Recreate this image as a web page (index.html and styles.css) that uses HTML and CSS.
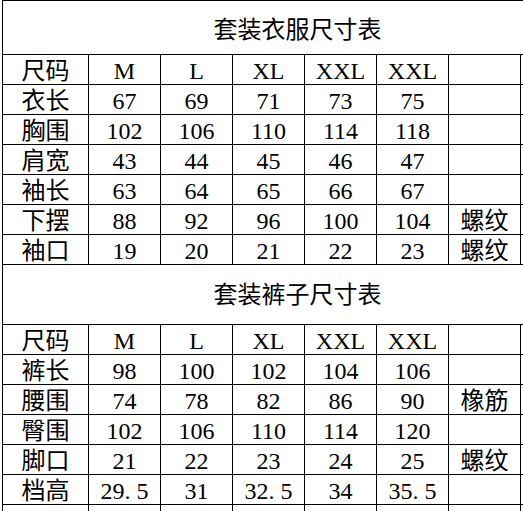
FILE: index.html
```html
<!DOCTYPE html>
<html lang="zh">
<head>
<meta charset="utf-8">
<title>套装尺寸表</title>
<link rel="stylesheet" href="styles.css">
</head>
<body>
<div class="sheet">
<table class="size-table">
  <colgroup>
    <col class="c-label">
    <col class="c-val"><col class="c-val"><col class="c-val"><col class="c-val"><col class="c-val">
    <col class="c-val"><col class="c-val">
  </colgroup>
  <tbody>
    <tr class="title-row first"><td colspan="8">套装衣服尺寸表</td></tr>
    <tr><td>尺码</td><td>M</td><td>L</td><td>XL</td><td>XXL</td><td>XXL</td><td></td><td></td></tr>
    <tr><td>衣长</td><td>67</td><td>69</td><td>71</td><td>73</td><td>75</td><td></td><td></td></tr>
    <tr><td>胸围</td><td>102</td><td>106</td><td>110</td><td>114</td><td>118</td><td></td><td></td></tr>
    <tr><td>肩宽</td><td>43</td><td>44</td><td>45</td><td>46</td><td>47</td><td></td><td></td></tr>
    <tr><td>袖长</td><td>63</td><td>64</td><td>65</td><td>66</td><td>67</td><td></td><td></td></tr>
    <tr><td>下摆</td><td>88</td><td>92</td><td>96</td><td>100</td><td>104</td><td>螺纹</td><td></td></tr>
    <tr><td>袖口</td><td>19</td><td>20</td><td>21</td><td>22</td><td>23</td><td>螺纹</td><td></td></tr>
    <tr class="title-row second"><td colspan="8">套装裤子尺寸表</td></tr>
    <tr><td>尺码</td><td>M</td><td>L</td><td>XL</td><td>XXL</td><td>XXL</td><td></td><td></td></tr>
    <tr><td>裤长</td><td>98</td><td>100</td><td>102</td><td>104</td><td>106</td><td></td><td></td></tr>
    <tr><td>腰围</td><td>74</td><td>78</td><td>82</td><td>86</td><td>90</td><td>橡筋</td><td></td></tr>
    <tr><td>臀围</td><td>102</td><td>106</td><td>110</td><td>114</td><td>120</td><td></td><td></td></tr>
    <tr><td>脚口</td><td>21</td><td>22</td><td>23</td><td>24</td><td>25</td><td>螺纹</td><td></td></tr>
    <tr><td>档高</td><td>29.<span class="dec">5</span></td><td>31</td><td>32.<span class="dec">5</span></td><td>34</td><td>35.<span class="dec">5</span></td><td></td><td></td></tr>
    <tr><td>&nbsp;</td><td></td><td></td><td></td><td></td><td></td><td></td><td></td></tr>
  </tbody>
</table>
</div>
</body>
</html>
```

FILE: styles.css
```css
html, body {
  margin: 0;
  padding: 0;
  background: #fff;
  overflow: hidden;
  width: 523px;
  height: 511px;
}

.sheet {
  margin-left: 2px;
  width: 521px;
  height: 511px;
  overflow: hidden;
}

.size-table {
  border-collapse: collapse;
  table-layout: fixed;
  width: 591px;
  font-family: "Liberation Serif", "Noto Sans CJK SC", serif;
  font-size: 24px;
  color: #000;
}

.c-label { width: 86px; }
.c-val { width: 72px; }

.size-table td {
  border: 1px solid #000;
  height: 29px;
  padding: 2px 0 0 0;
  text-align: center;
  vertical-align: middle;
  line-height: 26px;
  white-space: nowrap;
  overflow: hidden;
  box-sizing: border-box;
}

.size-table tr {
  height: 30px;
}

.title-row.first td {
  height: 54px;
  padding-top: 4px;
}

.title-row.second td {
  height: 60px;
  padding-top: 0;
}

.dec {
  margin-left: 6px;
}
```
